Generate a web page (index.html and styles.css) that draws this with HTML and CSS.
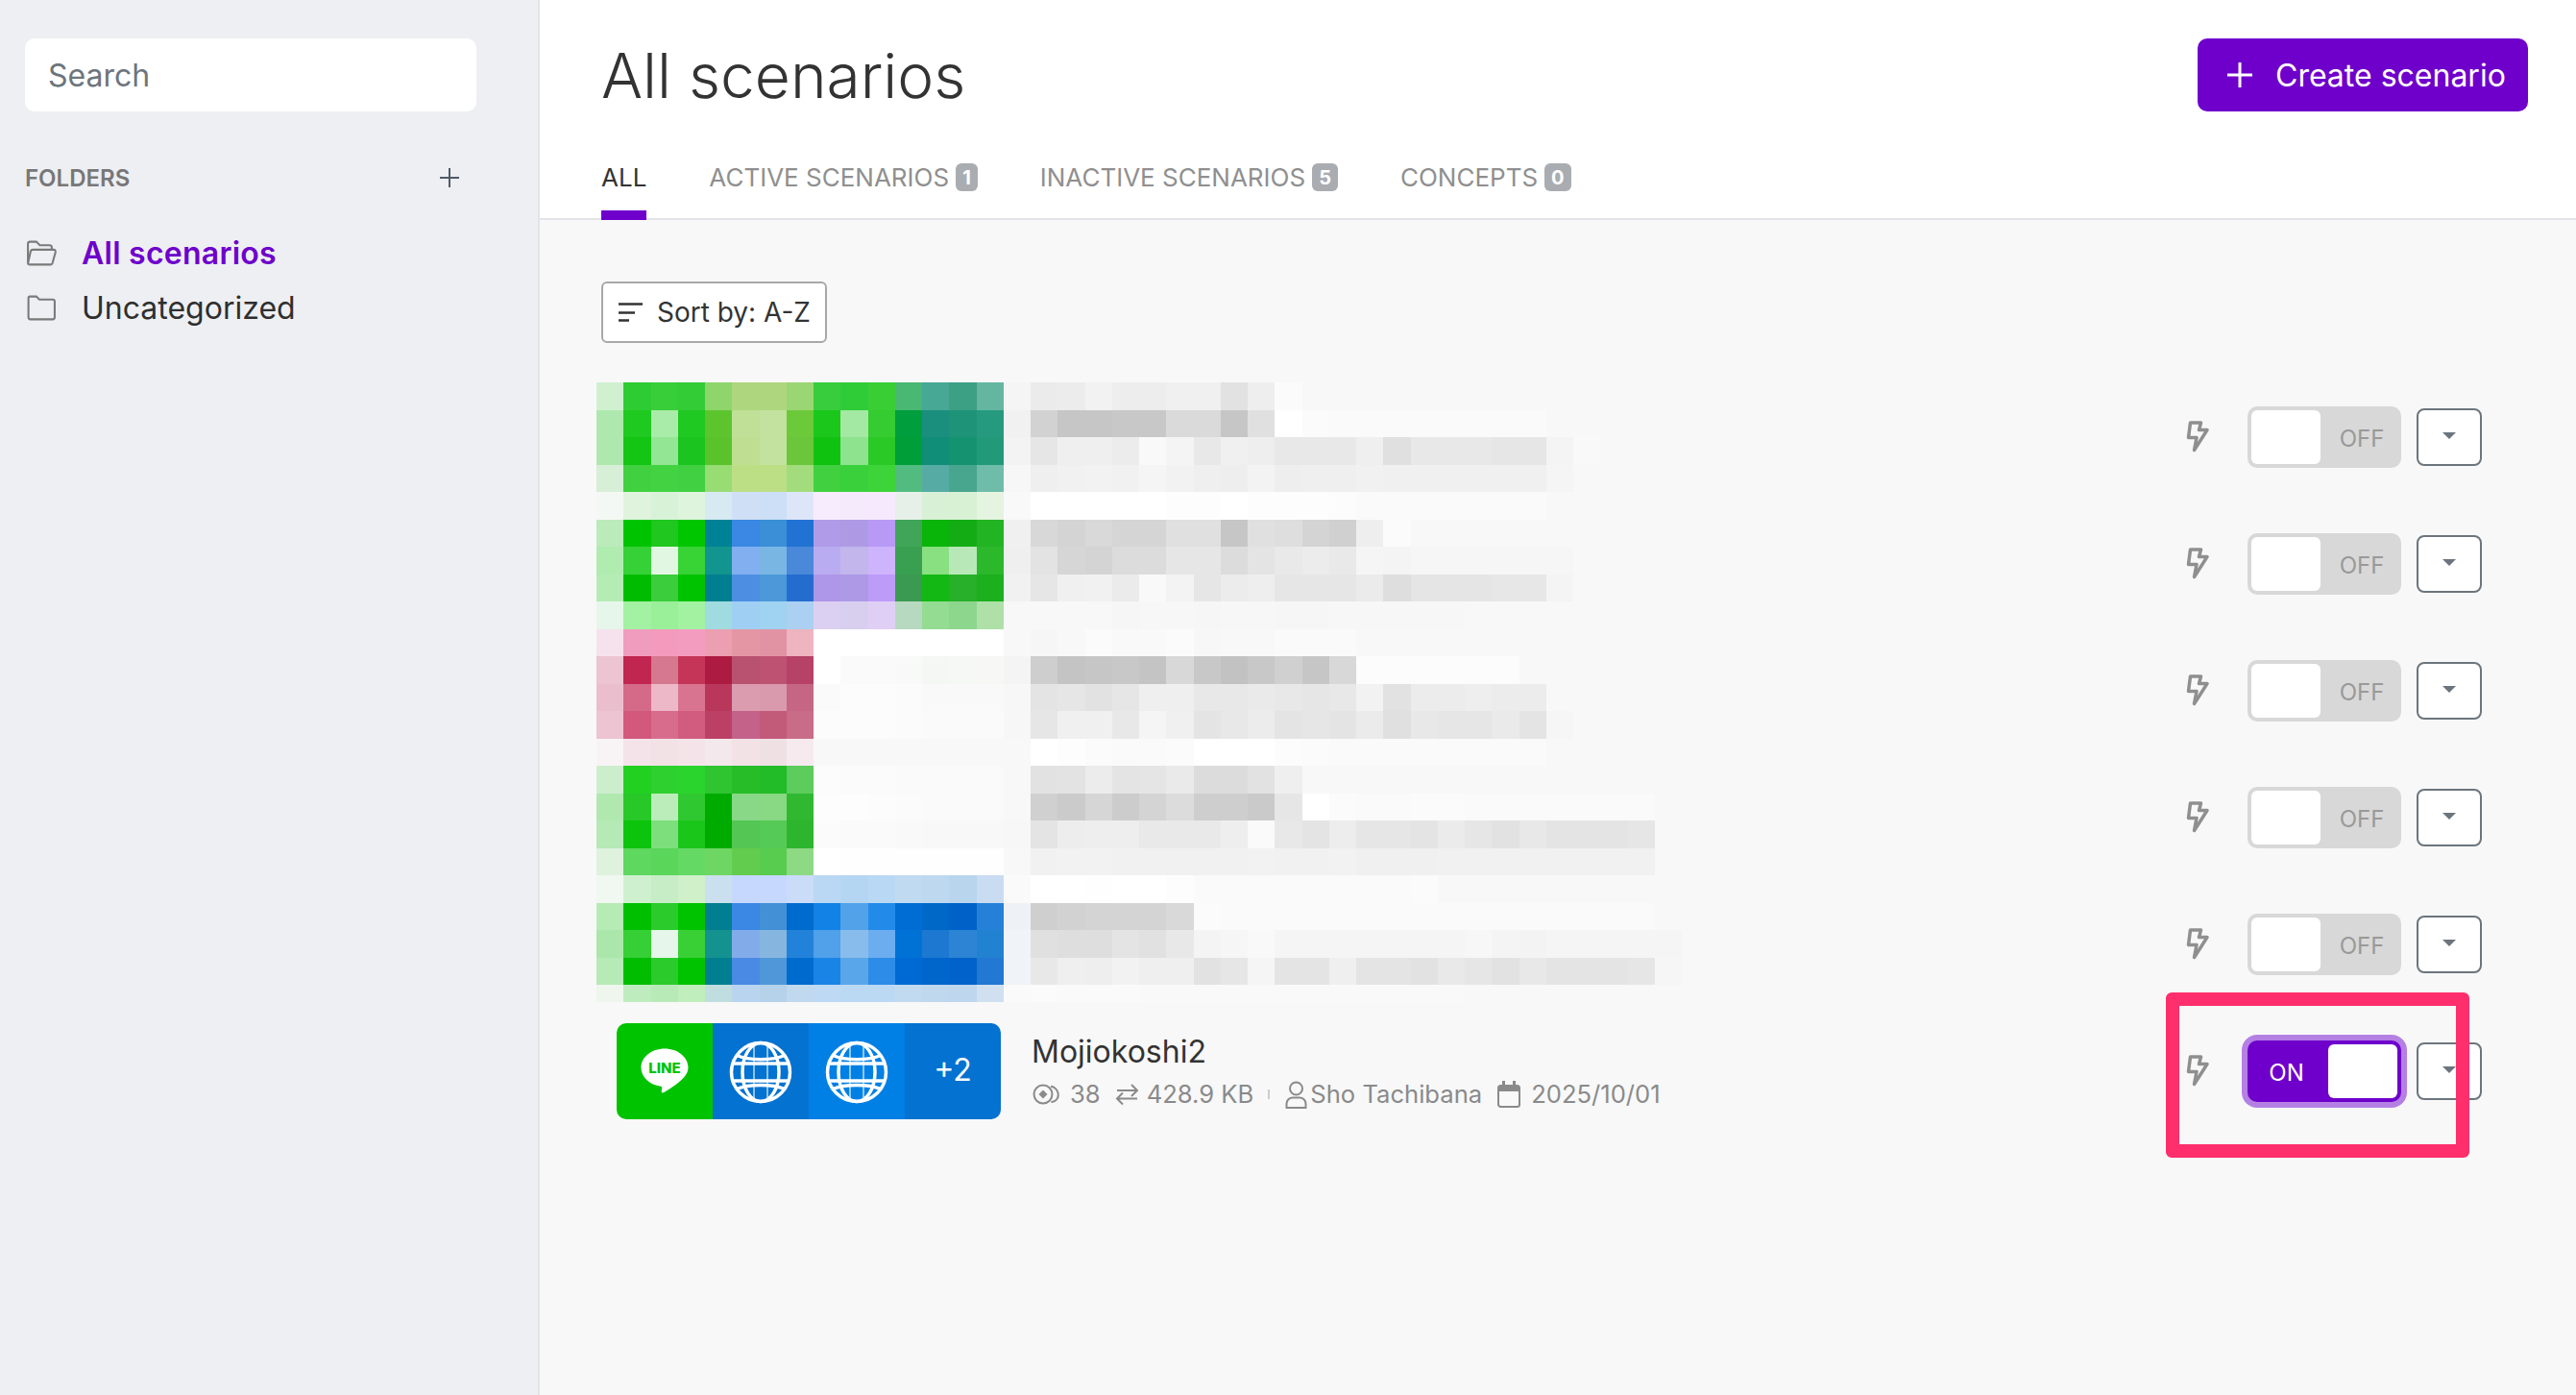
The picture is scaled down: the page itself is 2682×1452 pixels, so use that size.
FILE: index.html
```html
<!DOCTYPE html>
<html lang="en">
<head>
<meta charset="utf-8">
<title>All scenarios</title>
<link rel="stylesheet" href="styles.css">
</head>
<body>
<div class="app">
  <aside class="sidebar">
    <div class="search">Search</div>
    <div class="folders-head">
      <span class="folders-title">FOLDERS</span>
      <svg class="folders-add" viewBox="0 0 20 20"><path d="M10 0V20M0 10H20"/></svg>
    </div>
    <div class="folder folder-active">
      <svg class="folder-icon" viewBox="0 0 32 26"><path d="M3 23V3.5C3 2.2 3.8 1.5 5 1.5H11.500L15 5H25C26.200 5 27 5.800 27 7V9.500M3 23.500C3.300 24.300 4 24.500 5 24.500H26C27 24.500 27.500 24 27.800 23L30.800 12C31 10.600 30.300 9.500 29 9.500H8C6.800 9.500 6 10.200 5.700 11.200Z"/></svg>
      <span>All scenarios</span>
    </div>
    <div class="folder">
      <svg class="folder-icon" viewBox="0 0 32 26"><path d="M3.500 22.500V3C3.500 2 4.200 1.500 5 1.500H11.500L14.500 4.500H28C29.200 4.500 30 5.300 30 6.500V22.500C30 23.700 29.200 24.500 28 24.500H5.500C4.300 24.500 3.500 23.700 3.500 22.500Z"/></svg>
      <span>Uncategorized</span>
    </div>
  </aside>
  <main class="main">
    <header class="header">
      <div class="title-row">
        <h1 class="title">All scenarios</h1>
        <button class="create">
          <svg class="create-plus" viewBox="0 0 26 26"><path d="M13 0V26M0 13H26"/></svg>
          <span>Create scenario</span>
        </button>
      </div>
      <nav class="tabs">
        <a class="tab tab-active">ALL</a>
        <a class="tab">ACTIVE SCENARIOS<span class="badge">1</span></a>
        <a class="tab">INACTIVE SCENARIOS<span class="badge">5</span></a>
        <a class="tab">CONCEPTS<span class="badge">0</span></a>
      </nav>
    </header>
    <section class="content">
      <button class="sort">
        <svg class="sort-icon" viewBox="0 0 25 20"><path d="M0 1.500H25M0 10.500H17M0 18.500H11"/></svg>
        <span>Sort by: A-Z</span>
      </button>
      <div class="list">
        <svg class="mosaic" id="mosaic" width="1130" height="645" shape-rendering="crispEdges" aria-hidden="true"></svg>

        <div class="row">
          <div class="actions">
            <svg class="bolt" viewBox="0 0 24 33"><path d="M4.500 2H15.500L13.500 9.500H22L8.500 30.500L11 17.500H2.500Z"/></svg>
            <div class="toggle"><span class="thumb"></span><span class="toggle-label">OFF</span></div>
            <button class="caret"><span class="caret-tri"></span></button>
          </div>
        </div>
        <div class="row">
          <div class="actions">
            <svg class="bolt" viewBox="0 0 24 33"><path d="M4.500 2H15.500L13.500 9.500H22L8.500 30.500L11 17.500H2.500Z"/></svg>
            <div class="toggle"><span class="thumb"></span><span class="toggle-label">OFF</span></div>
            <button class="caret"><span class="caret-tri"></span></button>
          </div>
        </div>
        <div class="row">
          <div class="actions">
            <svg class="bolt" viewBox="0 0 24 33"><path d="M4.500 2H15.500L13.500 9.500H22L8.500 30.500L11 17.500H2.500Z"/></svg>
            <div class="toggle"><span class="thumb"></span><span class="toggle-label">OFF</span></div>
            <button class="caret"><span class="caret-tri"></span></button>
          </div>
        </div>
        <div class="row">
          <div class="actions">
            <svg class="bolt" viewBox="0 0 24 33"><path d="M4.500 2H15.500L13.500 9.500H22L8.500 30.500L11 17.500H2.500Z"/></svg>
            <div class="toggle"><span class="thumb"></span><span class="toggle-label">OFF</span></div>
            <button class="caret"><span class="caret-tri"></span></button>
          </div>
        </div>
        <div class="row">
          <div class="actions">
            <svg class="bolt" viewBox="0 0 24 33"><path d="M4.500 2H15.500L13.500 9.500H22L8.500 30.500L11 17.500H2.500Z"/></svg>
            <div class="toggle"><span class="thumb"></span><span class="toggle-label">OFF</span></div>
            <button class="caret"><span class="caret-tri"></span></button>
          </div>
        </div>

        <div class="row row-on">
          <div class="logos">
            <div class="logo logo-line">
              <svg class="line-icon" viewBox="0 0 50 48">
                <path class="line-bubble" d="M25 .5C11.500.5 .5 9.300.5 20.200C.5 30 9.200 38.100 21 39.700C22.500 40 22.300 41 22 42.500C21.800 44 21.200 47.200 23.500 46.300C26 45.300 37 38.500 42.500 33C47 29 49.500 24.800 49.500 20.200C49.500 9.300 38.500.5 25 .5Z"/>
                <text class="line-text" x="25" y="26" text-anchor="middle">LINE</text>
              </svg>
            </div>
            <div class="logo logo-web">
              <svg class="globe" viewBox="0 0 66 66">
                <circle cx="33" cy="33" r="30.500"/>
                <ellipse cx="33" cy="33" rx="19" ry="30.500"/>
                <path d="M8 15.500C20 21 46 21 58 15.500M8 50.500C20 45 46 45 58 50.500M3 24H63M3 42H63"/>
                <path class="globe-thin" d="M26 4V62M40 4V62"/>
              </svg>
            </div>
            <div class="logo logo-web-alt">
              <svg class="globe" viewBox="0 0 66 66">
                <circle cx="33" cy="33" r="30.500"/>
                <ellipse cx="33" cy="33" rx="19" ry="30.500"/>
                <path d="M8 15.500C20 21 46 21 58 15.500M8 50.500C20 45 46 45 58 50.500M3 24H63M3 42H63"/>
                <path class="globe-thin" d="M26 4V62M40 4V62"/>
              </svg>
            </div>
            <div class="logo logo-web logo-more">+2</div>
          </div>
          <div class="info">
            <div class="name">Mojiokoshi2</div>
            <div class="meta">
              <svg class="meta-eye" viewBox="0 0 30 22"><circle cx="11" cy="11" r="9.500"/><path class="meta-fill" d="M11 6.500L15.500 11L11 15.500L6.500 11Z"/><path d="M19 2.800C27.500 3.500 31 17 19.500 19.300"/></svg>
              <span class="meta-count">38</span>
              <svg class="meta-arrows" viewBox="0 0 25 24"><path d="M2 8H23M17 2L23 8L17 14M23 16.500H2M8 10.500L2 16.500L8 22.500"/></svg>
              <span class="meta-size">428.9 KB</span>
              <span class="meta-sep"></span>
              <svg class="meta-user" viewBox="0 0 23 29"><circle cx="11.500" cy="8" r="6.500"/><path d="M1.500 28V24C1.500 20 4.500 17.500 8 17.500H15C18.500 17.500 21.500 20 21.500 24V28Z"/></svg>
              <span class="meta-owner">Sho Tachibana</span>
              <svg class="meta-cal" viewBox="0 0 24 28"><path d="M3.500 5H20.500C21.800 5 23 6 23 7.500V24.500C23 26 21.800 27 20.500 27H3.500C2.200 27 1 26 1 24.500V7.500C1 6 2.200 5 3.500 5Z"/><path class="meta-fill" d="M1 6H23V11H1ZM5 0H8V6H5ZM16 0H19V6H16Z"/></svg>
              <span class="meta-date">2025/10/01</span>
            </div>
          </div>
          <div class="actions">
            <svg class="bolt" viewBox="0 0 24 33"><path d="M4.500 2H15.500L13.500 9.500H22L8.500 30.500L11 17.500H2.500Z"/></svg>
            <div class="toggle toggle-on"><span class="thumb"></span><span class="toggle-label">ON</span></div>
            <button class="caret"><span class="caret-tri"></span></button>
          </div>
          <div class="annotation"></div>
        </div>
      </div>
    </section>
  </main>
</div>
<script src="mosaic.js"></script>
</body>
</html>
```

FILE: styles.css
```css
* { box-sizing: border-box; }
html, body { margin: 0; height: 100%; }
body {
  font-family: Inter, "Noto Sans", sans-serif;
  color: #333;
  overflow: hidden;
  background: #f8f8f8;
}
button { font: inherit; padding: 0; }

.app { display: flex; height: 100%; }

/* Sidebar */
.sidebar {
  width: 562px;
  flex: none;
  padding: 40px 64px 0 26px;
  background: #eeeff3;
  border-right: 2px solid #e3e3e9;
}
.search {
  height: 76px;
  padding-left: 24px;
  display: flex;
  align-items: center;
  background: #fff;
  border-radius: 10px;
  font-size: 32px;
  color: #6c757d;
}
.folders-head {
  display: flex;
  justify-content: space-between;
  align-items: center;
  margin-top: 52px;
  height: 34px;
  padding-right: 18px;
}
.folders-title { font-size: 24px; font-weight: 600; color: #777; }
.folders-add { width: 20px; height: 20px; fill: none; stroke: #4f5b67; stroke-width: 2; }
.folder {
  display: flex;
  align-items: center;
  gap: 26px;
  height: 57px;
  font-size: 32px;
  color: #2f2f2f;
}
.folders-head + .folder { margin-top: 33px; }
.folder-active { color: #6f00cc; font-weight: 600; letter-spacing: .25px; }
.folder-icon { width: 33px; height: 27px; fill: none; stroke: #7a7a7a; stroke-width: 2; flex: none; }

/* Main */
.main { flex: 1; display: flex; flex-direction: column; min-width: 0; }
.header {
  height: 229px;
  padding: 40px 50px 0 64px;
  background: #fff;
  border-bottom: 2px solid #e3e3e9;
}
.title-row { display: flex; justify-content: space-between; align-items: center; height: 76px; }
.title { margin: 0; font-size: 64px; font-weight: 300; color: #333; }
.create {
  width: 344px;
  height: 76px;
  display: flex;
  align-items: center;
  gap: 24px;
  padding-left: 31px;
  background: #6f00cc;
  border: 0;
  border-radius: 10px;
  color: #fff;
  font-size: 32px;
}
.create-plus { width: 26px; height: 26px; fill: none; stroke: #fff; stroke-width: 3; flex: none; }
.tabs { display: flex; gap: 65px; margin-top: 44px; }
.tab {
  display: flex;
  align-items: center;
  gap: 7px;
  height: 69px;
  padding-bottom: 20px;
  font-size: 26px;
  color: #8f8f8f;
}
.tab-active { color: #333; position: relative; }
.tab-active::after {
  content: "";
  position: absolute;
  left: 0;
  right: 0;
  bottom: 0;
  height: 10px;
  background: #6f00cc;
}
.badge {
  height: 29px;
  padding: 0 7px;
  display: flex;
  align-items: center;
  background: #a9adb1;
  border-radius: 6px;
  color: #fff;
  font-size: 20px;
  font-weight: 700;
}

/* Content */
.content { flex: 1; padding: 64px 98px 0 64px; }
.sort {
  width: 235px;
  height: 64px;
  display: flex;
  align-items: center;
  gap: 15px;
  padding-left: 16px;
  background: #fff;
  border: 2px solid #a8a8a8;
  border-radius: 6px;
  color: #333;
  font-size: 28px;
}
.sort-icon { width: 25px; height: 20px; fill: none; stroke: #333; stroke-width: 2.500; flex: none; }
.list { margin-top: 32px; position: relative; }
.mosaic { position: absolute; left: -5px; top: 9px; }
.row { height: 132px; display: flex; align-items: center; position: relative; }
.actions { margin-left: auto; display: flex; align-items: center; }
.bolt { width: 24px; height: 33px; margin: -2px 40px 0 0; fill: none; stroke: #8f8f8f; stroke-width: 3.500; stroke-linejoin: round; }
.toggle {
  width: 160px;
  height: 64px;
  padding: 4px;
  display: flex;
  align-items: center;
  background: #d8d8d8;
  border-radius: 10px;
  margin-right: 16px;
}
.thumb { width: 72px; height: 56px; background: #fff; border-radius: 6px; flex: none; }
.toggle-label { flex: 1; padding: 2px 0 0 6px; text-align: center; font-size: 24px; color: #999; }
.toggle-on {
  flex-direction: row-reverse;
  background: #6f00cc;
  box-shadow: 0 0 0 6px #b580e4;
}
.toggle-on .toggle-label { color: #fff; padding: 3px 7px 0 0; }
.caret {
  width: 68px;
  height: 60px;
  display: flex;
  align-items: center;
  justify-content: center;
  background: #fff;
  border: 2px solid #6c757d;
  border-radius: 8px;
}
.caret-tri {
  width: 0;
  height: 0;
  border-left: 7px solid transparent;
  border-right: 7px solid transparent;
  border-top: 7px solid #6c757d;
  margin-top: -4px;
}

/* Visible scenario */
.logos { display: flex; margin-left: 16px; border-radius: 10px; overflow: hidden; flex: none; }
.logo {
  width: 100px;
  height: 100px;
  display: flex;
  align-items: center;
  justify-content: center;
  color: #fff;
  font-size: 32px;
}
.logo-more { padding-bottom: 3px; }
.logo-line { background: #00c300; }
.logo-web { background: #0372d0; }
.logo-web-alt { background: #0080e5; }
.line-icon { width: 50px; height: 48px; }
.line-bubble { fill: #fff; }
.line-text { fill: #00c300; font-family: Inter, sans-serif; font-size: 15px; font-weight: 800; }
.globe { width: 66px; height: 66px; margin-top: 1px; fill: none; stroke: #fff; stroke-width: 3.500; }
.globe-thin { stroke-width: 1.500; stroke-opacity: .75; }
.info { margin-left: 32px; }
.name { font-size: 32px; line-height: 40px; padding-top: 2px; color: #333; }
.meta {
  display: flex;
  align-items: center;
  margin-top: 6px;
  font-size: 25.600px;
  line-height: 36px;
  color: #8a8a8a;
}
.meta svg { fill: none; stroke: #8a8a8a; stroke-width: 2; flex: none; }
.meta .meta-fill { fill: #8a8a8a; stroke: none; }
.meta-eye { width: 30px; height: 22px; margin: 0 9px 0 1px; }
.meta-arrows { width: 25px; height: 24px; margin: 0 8px 0 15px; }
.meta-sep { width: 2px; height: 10px; background: #ccc; margin: 0 16px 0 15px; }
.meta-user { width: 23px; height: 29px; margin-right: 3px; }
.meta-cal { width: 24px; height: 28px; margin: 0 11px 0 16px; }

/* Red marker drawn over the screenshot */
.annotation {
  position: absolute;
  right: 13px;
  top: -16px;
  width: 316px;
  height: 172px;
  border: 14px solid #ff2e6c;
  border-radius: 6px;
  pointer-events: none;
}
```

FILE: mosaic.js
```js
// Censoring mosaic placed over the hidden scenario rows.
// Two-digit tokens are greys, six-digit tokens are full colours, "-" is empty.
var CELL_W = 28.25, CELL_H = 28.5;
var ROWS = [
"d0f0d0 2ecc33 38ce3a 33cc37 8ed66c aed67e aed67e 9ad674 38cd3c 30cc38 38ce34 48b873 48a896 3ca085 65b6a0 f5 eb ec f2 ed ed f0 f0 e2 ee fb",
"aee8ae 1fc91f a9eca9 20c822 5cc52e c0e097 c3e29f 6cc93a 1cc71c a3e8a3 34cc30 009e3c 1a8f7d 1f9378 269a7e f1 d2 c6 c6 c8 c8 da da c6 e0 ff fb fa fa fa fa fa fa fa fa",
"aee8ae 14c514 93e693 1bc41e 5ac32c bfde92 c4e29f 6bc63b 10c210 8ee38e 2bc926 009e38 108e78 159371 229a7a f3 e6 ef ef ec f9 f4 e8 f0 ee e8 e8 e8 ef e0 e8 e8 e8 e6 e6 f4 f9",
"d6efd6 40d040 42d242 40d042 98dc74 bcdf86 bcdf86 a2dc7c 40d040 3ad03c 3cd438 52bc80 56aca4 48a58e 70bcaa f7 ef f1 f2 f1 f5 f2 ef ee f3 ee ef ef f1 f0 f0 f0 f0 f0 f0 f5",
"f4f8f4 dff3dd d8f2d8 def4dc d7e9f1 cfe0f6 ccdff6 dde6f8 f6ecfd f5eafc f6e9fd e6f0e8 d8f1d6 d8f1d4 e5f4e0 f9 ff ff ff ff ff fd fd ff fd fd fd fc fa fa fa fa fa fa fa",
"bbebbb 00c300 1fc71f 00c600 008296 3a88e3 3a8fd6 2172d2 b09be8 ae9ae4 b999f6 40a558 0ab50a 14ac14 22b422 f0 d8 d4 d9 d5 d5 e0 e0 c6 e0 de d4 d0 ee fb",
"b0ebb0 36d136 e2f7e2 38d335 12948f 82aff0 7ab6e4 4a88da baacf0 c2b6ec ceb4fc 38a050 88e080 b8e8b8 2bb82b ef e3 d6 d4 dc dc e6 e6 dc e4 e9 ec e9 f5 f4 f6 f6 f6 f6 f6 f6",
"b5ecb5 00bc00 3bcd3b 00c300 007f90 4d8ee3 4c98d8 246dcf ae96e9 ad99e5 bd9bf9 3a9a52 14b814 28b02a 1cb01f f1 e6 f0 f1 eb f9 f3 e6 ec ee e6 e6 e6 eb de e5 e5 e5 e7 e7 f4 f8",
"e6f6ea a3f1a3 99f099 a2f2a2 a0dcdf a0cff4 a0d2f2 abd0f1 dbd0f1 d8cfef e0cff5 b7d9c0 93dc92 8dd68e aee0a8 f8 f8 f8 f8 f6 f7 f7 f6 f7 f7 f6 f6 f7 f7 f7 f7 f7",
"f6e2ec f09cbe f49abd f49cc0 eb9fb0 e596a5 e293a3 eeb4c0 ff ff ff ff ff ff ff f8 f6 f8 fb f9 f9 fb f7 f8 f8 fa fa fa f8 f8",
"ecc4d2 c12650 d6788f c53558 ad1a42 b95270 bd5272 b64268 ff fa fa f9 f5f7f5 f6f8f6 f7f8f6 f4 ce c4 c6 c8 c4 d8 c8 c2 c8 d0 c6 d8 fc fc fc fc fc fc",
"ebbecd d56a88 edb8c8 d97490 b9375b dc9cb0 da9aad c56683 fa fc fc fb f9 f9 f9 f7 e4 e6 e2 e6 ef ef e8 e8 ea e8 e6 e8 f2 e2 ec ec ee ec ec",
"edc4d2 d2587c d86c8c d25c80 bc4066 c4628a c25a7a c86c88 fc fc fc fb fa fa fa f7 e6 f0 f0 e8 f5 f0 e4 e8 ec e4 e6 e4 eb e0 e8 e6 e6 ea e4 f6 f8",
"f8f4f6 f5e3ea f2e2e6 f4e4ea f3e8ec f2e2e6 efe0e4 f6eaee f8 f8 f8 f8 f8 f8 f8 f8 ff fd fb fa fa fb ff ff ff fc fb fa fa fa fa fa fa fa fa",
"cdeecd 22d022 2ed030 2ad42c 2fc530 26bd28 22bc28 5ccc5c fc fb fb fa fa fa fa f8 e2 e3 ec e4 e5 ea dc dc e2 ef f8",
"b0e8b0 28c828 baedba 30c830 00ab00 88d888 88d884 30b830 fd fd fc fb fa fa fa f8 d0 cb d6 cc d4 dc ce ce ca e6 ff fb fa fa fb fb fa fa fa fa fa fa fa",
"b5e9b5 0cc40c 7cdf7c 1ac61a 00ab00 54c654 56ca56 2db62d fb fa fa f9 f8 f8 f8 f7 e4 ed ee ee e9 e9 e9 ee fa e8 e4 ed e6 e6 e4 eb e6 e2 e8 e4 e4 e4 e6",
"def2de 5ed85e 5ad65a 64d964 6ed662 62cc4e 58cc4e 8ed984 ff fe fe fe fe fe fe f8 f1 f2 f2 f1 f1 f1 f1 f1 f2 f1 f1 f2 f0 f0 f0 f1 f1 f1 f1 f1 f1 f1 f1",
"f1f8f1 cff0cf c6edc6 cff0c9 cbe0ef c6d8fd c6d8fd cbdcf9 bad8f4 b5d6f2 b9d8f4 c0daf1 bed8f0 b9d5ee c9dcf2 fa ff ff fe ff ff fd fa fa fa fa fa fa fa fa fb",
"b6ebb6 00bf00 2acb2a 00c300 007f90 3b87e4 4390d6 006bce 1282e6 52a2ea 228bea 006dd4 0069c8 0062c8 2580d8 eef2f6 cf d2 d4 d4 d4 d9 fb fa fa fa fa fa fa fa fa fa fa fa fa fa fa fa fa",
"abe6ab 36cf36 e6f6ea 39d036 149290 82ace9 86b6e0 2282d9 50a0ea 88bcec 6cadf0 0072d6 1c78d0 2e84d4 2282d2 f0f4f8 e0 de de e4 e1 e8 f4 f6 f9 f5 f5 f5 f5 f5 f5 f5 f7 f4 f3 f5 f5 f5 f5 f5",
"b6eab6 00bd00 2acb2a 00c300 007f90 4a8ae5 4f97d8 006bce 1a84e6 5aa6ea 2c8ce8 006ad4 0066cc 0062ca 2278d2 f0f4f8 e8 ef ee f2 ef ef e2 e6 f5 e4 e4 ef e4 e4 e2 e9 e6 e2 e8 e4 e4 e4 e6 f6",
"eef6ee bfecbf b8eab8 c0eebc c0dee0 b8d4ee b6d2ea c0d9ef bdd9f3 bbd9f3 bbd9f3 c2daf0 c0d8ee bed6ee d0e0f0 fa fb fa fa fa f9 f9 f9 f9 f9 f9 f9 f9 f9 f9 f9 f9"
];

(function () {
  var svg = document.getElementById("mosaic");
  var NS = "http://www.w3.org/2000/svg";
  ROWS.forEach(function (row, y) {
    row.split(" ").forEach(function (token, x) {
      if (token === "-") return;
      var hex = token.length === 2 ? token + token + token : token;
      var rect = document.createElementNS(NS, "rect");
      rect.setAttribute("x", x * CELL_W);
      rect.setAttribute("y", y * CELL_H);
      rect.setAttribute("width", CELL_W);
      rect.setAttribute("height", CELL_H);
      rect.setAttribute("fill", "#" + hex);
      svg.appendChild(rect);
    });
  });
})();
```
